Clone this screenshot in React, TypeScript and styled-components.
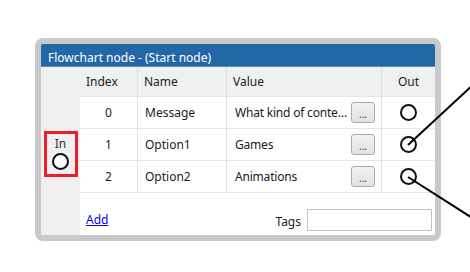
import styled, { createGlobalStyle } from "styled-components";

const GlobalStyle = createGlobalStyle`
  html, body {
    margin: 0;
    background: #ffffff;
  }
  body {
    font-family: "Noto Sans", "Open Sans", sans-serif;
    font-size: 12px;
    color: #1a1a1a;
  }
`;

const rows = [
  { index: 0, name: "Message", value: "What kind of content do you like?" },
  { index: 1, name: "Option1", value: "Games" },
  { index: 2, name: "Option2", value: "Animations" },
];

export default function App() {
  return (
    <Page>
      <GlobalStyle />
      <NodeFrame>
        <Title>Flowchart node - (Start node)</Title>
        <Body>
          <InColumn>
            <InPort>
              <span>In</span>
              <Port />
            </InPort>
          </InColumn>
          <Main>
            <Table>
              <HeadCell>Index</HeadCell>
              <HeadCell>Name</HeadCell>
              <HeadCell>Value</HeadCell>
              <HeadCell $center>Out</HeadCell>
              {rows.map((r) => (
                <Row key={r.index}>
                  <Cell $center>{r.index}</Cell>
                  <Cell>{r.name}</Cell>
                  <Cell>
                    <ValueText>{r.value}</ValueText>
                    <DotsButton>...</DotsButton>
                  </Cell>
                  <Cell $center $last>
                    <Port />
                  </Cell>
                </Row>
              ))}
            </Table>
            <Footer>
              <AddLink href="#">Add</AddLink>
              <TagsLabel>Tags</TagsLabel>
              <TagsInput />
            </Footer>
          </Main>
        </Body>
      </NodeFrame>
      <Wires width="470" height="272" viewBox="0 0 470 272">
        <line x1="408" y1="145" x2="474" y2="84" />
        <line x1="408" y1="177" x2="474" y2="219" />
      </Wires>
    </Page>
  );
}

const Page = styled.div`
  position: relative;
  width: 470px;
  height: 272px;
  padding: 38px 0 0 35px;
  box-sizing: border-box;
  overflow: hidden;
`;

const NodeFrame = styled.div`
  width: 406px;
  height: 203px;
  box-sizing: border-box;
  border: 6px solid #c9c9c9;
  border-radius: 8px;
  background: #ffffff;
  display: flex;
  flex-direction: column;
  overflow: hidden;
`;

const Title = styled.div`
  height: 23px;
  line-height: 23px;
  padding-top: 2px;
  box-sizing: border-box;
  background: #2467a6;
  border-bottom: 1px solid #5b8fc4;
  color: #ffffff;
  padding-left: 7px;
  font-size: 12px;
`;

const Body = styled.div`
  flex: 1;
  display: flex;
`;

const InColumn = styled.div`
  width: 39px;
  background: #f0f0f0;
  display: flex;
  align-items: center;
  justify-content: center;
  padding-top: 6px;
  box-sizing: border-box;
`;

const InPort = styled.div`
  width: 34px;
  height: 46px;
  box-sizing: border-box;
  border: 3px solid #e8202a;
  display: flex;
  flex-direction: column;
  align-items: center;
  padding-top: 4px;
  gap: 3px;
  line-height: 12px;
  color: #333;
`;

const Port = styled.div`
  width: 17px;
  height: 17px;
  box-sizing: border-box;
  border: 2px solid #111111;
  border-radius: 50%;
  background: #ffffff;
`;

const Main = styled.div`
  flex: 1;
  display: flex;
  flex-direction: column;
`;

const Table = styled.div`
  display: grid;
  grid-template-columns: 58px 89px 155px 1fr;
  grid-template-rows: 29px repeat(3, 32px);
  border-bottom: 1px solid #e6e6e6;
`;

const HeadCell = styled.div<{ $center?: boolean }>`
  background: #f0f0f0;
  display: flex;
  align-items: center;
  justify-content: ${(p) => (p.$center ? "center" : "flex-start")};
  padding-left: ${(p) => (p.$center ? "0" : "6px")};
  border-right: 1px solid #e2e2e2;
  color: #222;
  &:nth-child(4) {
    border-right: none;
  }
`;

const Row = styled.div`
  display: contents;
`;

const Cell = styled.div<{ $center?: boolean; $last?: boolean }>`
  display: flex;
  align-items: center;
  justify-content: ${(p) => (p.$center ? "center" : "flex-start")};
  padding-left: ${(p) => (p.$center ? "0" : "7px")};
  border-top: 1px solid #e6e6e6;
  border-right: ${(p) => (p.$last ? "none" : "1px solid #e2e2e2")};
  min-width: 0;
  gap: 3px;
`;

const ValueText = styled.span`
  flex: 1;
  min-width: 0;
  white-space: nowrap;
  overflow: hidden;
  text-overflow: ellipsis;
  padding-left: 1px;
  letter-spacing: -0.2px;
`;

const DotsButton = styled.button`
  width: 24px;
  height: 21px;
  flex: none;
  margin-right: 6px;
  padding: 0 0 3px;
  box-sizing: border-box;
  border: 1px solid #adadad;
  border-radius: 3px;
  background: linear-gradient(#f2f2f2, #e3e3e3);
  font-family: "Noto Sans", sans-serif;
  font-size: 10px;
  line-height: 10px;
  color: #333;
  display: flex;
  align-items: flex-end;
  justify-content: center;
`;

const Footer = styled.div`
  flex: 1;
  display: flex;
  align-items: flex-end;
  padding: 0 3px 4px 6px;
`;

const AddLink = styled.a`
  color: #0000ee;
  text-decoration: underline;
  margin-bottom: 3px;
`;

const TagsLabel = styled.span`
  margin-left: auto;
  margin-right: 6px;
  margin-bottom: 1px;
  color: #222;
`;

const TagsInput = styled.input`
  width: 125px;
  height: 22px;
  box-sizing: border-box;
  border: 1px solid #c6c6c6;
  background: #fff;
  margin: 0;
`;

const Wires = styled.svg`
  position: absolute;
  left: 0;
  top: 0;
  pointer-events: none;
  line {
    stroke: #000;
    stroke-width: 2;
  }
`;
